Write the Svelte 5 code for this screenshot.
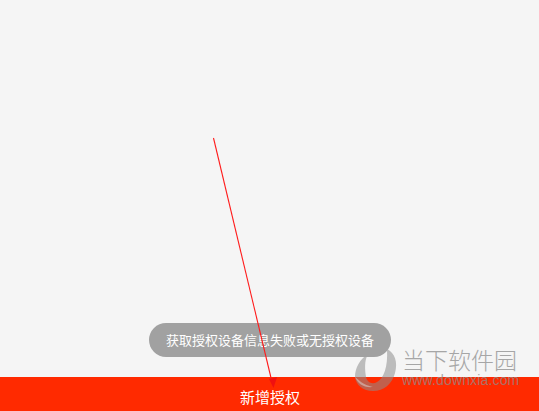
<script lang="ts">
  let toast = '获取授权设备信息失败或无授权设备';
  let action = '新增授权';
</script>

<div class="page">
  <div class="content"></div>
  <button class="add-btn">{action}</button>

  <div class="watermark">
    <svg class="wm-logo" width="46" height="46" viewBox="0 0 46 46">
      <path fill-rule="evenodd" d="M34 3 C42 7 45 16 42 27 C39 38 31 45 20 45 C10 45 3 39 2 31 C2 22 7 13 15 8 C11 15 12 24 13 31 C14 36 19 39 24 36 C31 32 35 21 34 3 Z" fill="#8c8c8c" fill-opacity="0.55" />
      <path d="M2 31 C6 34 10 39 20 41 C11 42 5 38 2 31 Z" fill="#d9d9d9" fill-opacity="0.5" />
    </svg>
    <div class="wm-text">
      <div class="wm-name">当下软件园</div>
      <div class="wm-url">www.downxia.com</div>
    </div>
  </div>

  <div class="toast">{toast}</div>

  <svg class="arrow" width="539" height="411" viewBox="0 0 539 411">
    <line x1="213.5" y1="138" x2="272" y2="382" stroke="#ff1a1a" stroke-width="1.1" />
    <polygon points="273.5,388 269,379 277,377" fill="#f01010" />
  </svg>
</div>

<style>
  :global(body) {
    margin: 0;
  }

  .page {
    position: relative;
    display: flex;
    flex-direction: column;
    width: 539px;
    height: 411px;
    overflow: hidden;
    background: #f5f5f5;
    font-family: "Noto Sans CJK SC", "Liberation Sans", sans-serif;
  }

  .content {
    flex: 1;
  }

  .add-btn {
    height: 34px;
    padding: 0 0 0 1px;
    border: none;
    background: #ff2a00;
    color: #fff;
    font-family: inherit;
    font-size: 15px;
    line-height: 40px;
  }

  .toast {
    position: absolute;
    left: 149px;
    top: 323px;
    width: 242px;
    height: 34px;
    border-radius: 17px;
    background: #a1a1a1;
    color: #fff;
    font-size: 13px;
    line-height: 34px;
    text-align: center;
    white-space: nowrap;
  }

  .watermark {
    position: absolute;
    left: 353px;
    top: 346px;
    display: flex;
    gap: 3px;
  }

  .wm-logo {
    flex: none;
  }

  .wm-text {
    display: flex;
    flex-direction: column;
    gap: 1px;
    color: #a6a6a6;
  }

  .wm-name {
    font-size: 23px;
    font-weight: 300;
    line-height: 27px;
    white-space: nowrap;
  }

  .wm-url {
    font-family: "Liberation Sans", sans-serif;
    font-size: 14px;
    line-height: 13px;
    letter-spacing: 0.15px;
    color: rgba(140, 140, 140, 0.75);
    white-space: nowrap;
  }

  .arrow {
    position: absolute;
    left: 0;
    top: 0;
    pointer-events: none;
  }
</style>
